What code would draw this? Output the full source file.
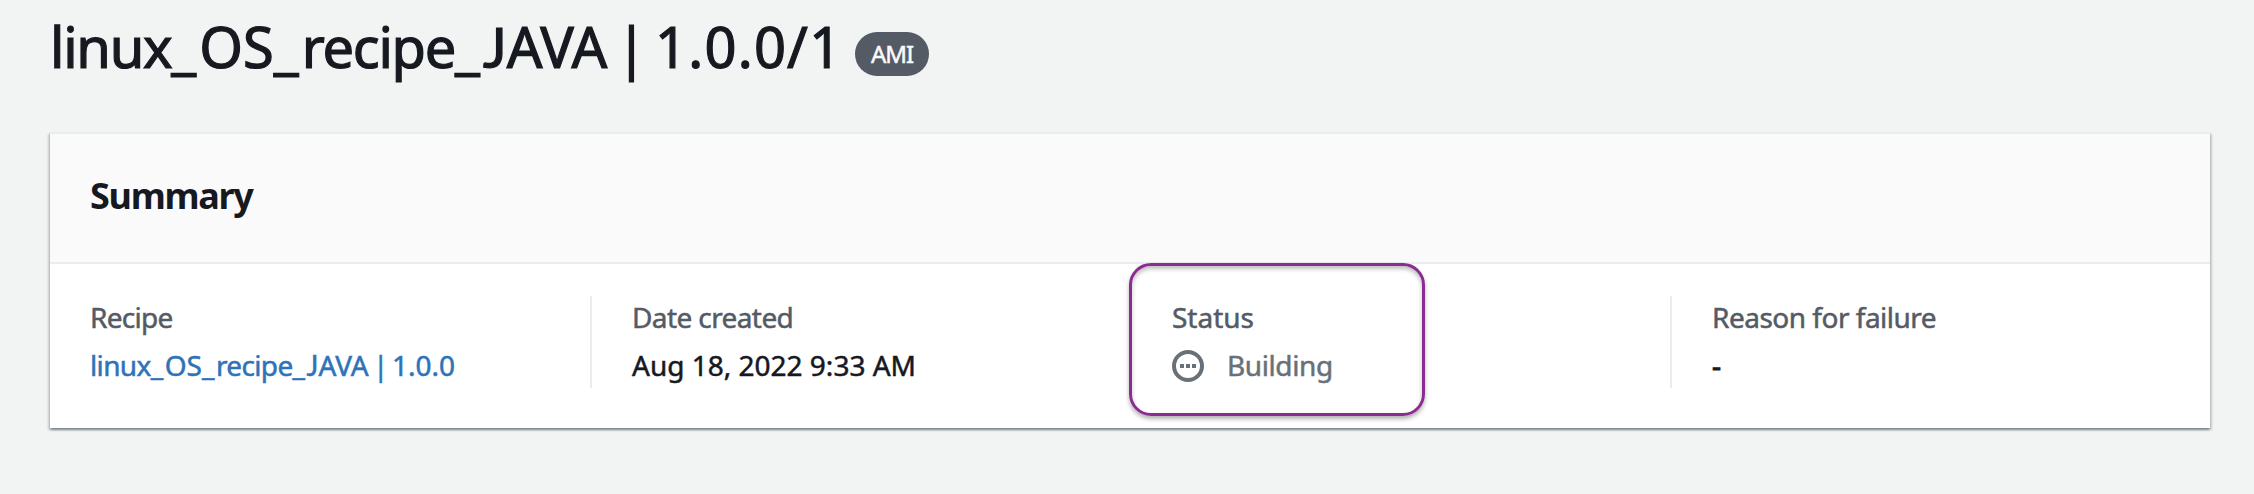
<template>
  <main class="page">
    <header class="heading">
      <h1 class="title">
        <span class="t-name"><span class="tight">linux</span><span class="wide">_</span>OS<span class="wide">_</span><span class="tight">recipe</span><span class="wide">_</span><span class="cap-j">J</span>AVA</span>
        <span class="t-bar">|</span>
        <span class="t-version">1.0.0/1</span>
      </h1>
      <span class="badge">AMI</span>
    </header>

    <section class="panel">
      <div class="panel-head">
        <h2>Summary</h2>
      </div>
      <div class="panel-body">
        <div class="column">
          <div class="label recipe-label">Recipe</div>
          <a class="value link"><span class="l-name"><span class="tight">linux</span><span class="wide">_</span>OS<span class="wide">_</span><span class="tight">recipe</span><span class="wide">_</span><span class="cap-j">J</span>AVA</span><span class="l-bar">|</span><span>1.0.0</span></a>
        </div>
        <div class="column divided">
          <div class="label date-label">Date created</div>
          <div class="value">Aug 18, 2022 9:33 AM</div>
        </div>
        <div class="column divided">
          <div class="label">Status</div>
          <div class="value status">
            <svg width="32" height="32" viewBox="0 0 32 32" aria-hidden="true">
              <circle cx="16" cy="16" r="14" fill="none" stroke="#687078" stroke-width="4" />
              <path d="M8 14h4v4H8zM14 14h4v4h-4zM20 14h4v4h-4z" fill="#687078" />
            </svg>
            <span class="building">Building</span>
          </div>
          <div class="highlight"></div>
        </div>
        <div class="column divided">
          <div class="label reason-label">Reason for failure</div>
          <div class="value dash">-</div>
        </div>
      </div>
    </section>
  </main>
</template>

<style>
body {
  background: #f2f3f3;
}
</style>

<style scoped>
.page {
  box-sizing: border-box;
  height: 494px;
  padding: 8px 44px 0 50px;
  overflow: hidden;
  background: #f2f3f3;
  color: #16191f;
  font-family: "Noto Sans", "Open Sans", sans-serif;
}
.heading {
  display: flex;
  height: 124px;
}
.title {
  display: flex;
  margin: 0;
  font-size: 56px;
  font-weight: 400;
  line-height: 77px;
  white-space: nowrap;
  -webkit-text-stroke: 1.2px currentColor;
}
.tight {
  letter-spacing: -0.023em;
}
.wide {
  letter-spacing: 0.056em;
}
.cap-j {
  font-family: Lato, "Noto Sans", sans-serif;
}
.t-name {
  width: 566px;
}
.t-bar {
  width: 39px;
}
.t-version {
  width: 200px;
  letter-spacing: 1.2px;
}
.badge {
  box-sizing: border-box;
  width: 74px;
  height: 44px;
  margin-top: 24px;
  border-radius: 22px;
  background: #545b64;
  color: #fafafa;
  font-size: 24px;
  letter-spacing: -1px;
  line-height: 44px;
  text-align: center;
  -webkit-text-stroke: 0.5px currentColor;
}
.panel {
  width: 2160px;
  border-top: 2px solid #eaeded;
  background: #fff;
  box-shadow: 0 2px 2px 0 rgba(0, 28, 36, 0.3), 2px 2px 2px 0 rgba(0, 28, 36, 0.15), -2px 2px 2px 0 rgba(0, 28, 36, 0.15);
}
.panel-head {
  box-sizing: border-box;
  height: 130px;
  padding: 38px 40px 0;
  border-bottom: 2px solid #eaeded;
  background: #fafafa;
}
h2 {
  margin: 0;
  font-size: 36px;
  font-weight: 700;
  letter-spacing: -1.3px;
  line-height: 48px;
}
.panel-body {
  display: grid;
  grid-template-columns: repeat(4, 540px);
  height: 132px;
  padding-top: 32px;
}
.column {
  position: relative;
  box-sizing: border-box;
  height: 92px;
  padding-left: 40px;
  font-size: 28px;
  white-space: nowrap;
  -webkit-text-stroke: 0.5px currentColor;
}
.divided {
  border-left: 2px solid #eaeded;
}
.label {
  height: 48px;
  color: #545b64;
  line-height: 43px;
}
.recipe-label {
  letter-spacing: -0.7px;
}
.date-label {
  letter-spacing: -0.6px;
}
.reason-label {
  letter-spacing: -0.5px;
}
.value {
  line-height: 42px;
}
.link {
  display: flex;
  color: #2e73b8;
}
.l-name {
  width: 283px;
}
.l-bar {
  width: 19px;
}
.status {
  display: flex;
  align-items: center;
  height: 44px;
  color: #687078;
}
.building {
  height: 44px;
  margin-left: 23px;
  letter-spacing: -0.4px;
  line-height: 42px;
}
.dash {
  -webkit-text-stroke-width: 1px;
}
.highlight {
  position: absolute;
  box-sizing: border-box;
  top: -33px;
  left: -3px;
  width: 296px;
  height: 153px;
  border: 3px solid #8b2c91;
  border-radius: 22px;
  box-shadow: 0 3px 4px rgba(0, 0, 0, 0.3), inset 0 3px 4px rgba(0, 0, 0, 0.25);
}
</style>
